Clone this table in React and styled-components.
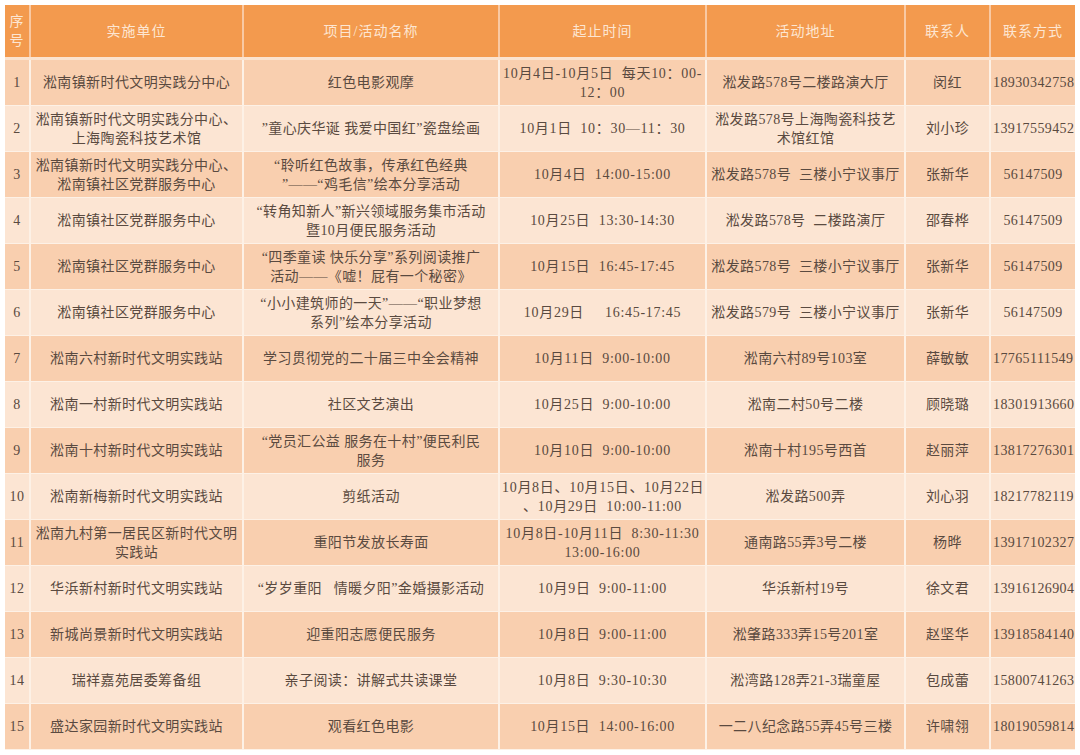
import React from "react";
import styled, { createGlobalStyle } from "styled-components";

const GlobalStyle = createGlobalStyle`
  html, body {
    margin: 0;
    padding: 0;
    background: #ffffff;
  }
`;

const Page = styled.div`
  padding: 5px;
  width: 1080px;
  box-sizing: border-box;
`;

const Table = styled.table`
  width: 1070px;
  table-layout: fixed;
  border-collapse: collapse;
  font-family: "Liberation Serif", "Noto Sans CJK SC", serif;
  font-size: 14px;
  line-height: 19px;
  color: #5a4a40;
`;

const HeadCell = styled.th`
  height: 52px;
  padding: 0;
  background: #f39a4e;
  color: #fde6d2;
  font-weight: normal;
  letter-spacing: 1px;
  text-align: center;
  vertical-align: middle;
  border-left: 2px solid #f9c9a3;
  border-bottom: 3px solid #fbe3cf;
  &:first-child {
    border-left: none;
  }
`;

const Row = styled.tr`
  background: ${(p) => (p.$odd ? "#f9cfaf" : "#fce5d3")};
`;

const Cell = styled.td`
  height: 45px;
  padding: 0 2px;
  text-align: center;
  vertical-align: middle;
  letter-spacing: ${(p) => (p.$wide ? "0.7px" : "0.4px")};
  border-left: 2px solid #fdf1e6;
  border-bottom: 1px solid #fdf1e6;
  white-space: nowrap;
  &:first-child {
    border-left: none;
    padding: 0;
  }
`;

const widths = [25, 213, 256, 207, 199, 85, 85];

const headers = [
  <>序<br />号</>,
  "实施单位",
  "项目/活动名称",
  "起止时间",
  "活动地址",
  "联系人",
  "联系方式",
];

const rows = [
  ["淞南镇新时代文明实践分中心", "红色电影观摩", "10月4日-10月5日  每天10：00-\n12：00", "淞发路578号二楼路演大厅", "闵红", "18930342758"],
  ["淞南镇新时代文明实践分中心、\n上海陶瓷科技艺术馆", "”童心庆华诞 我爱中国红”瓷盘绘画", "10月1日  10：30—11：30", "淞发路578号上海陶瓷科技艺\n术馆红馆", "刘小珍", "13917559452"],
  ["淞南镇新时代文明实践分中心、\n淞南镇社区党群服务中心", "“聆听红色故事，传承红色经典\n”——“鸡毛信”绘本分享活动", "10月4日  14:00-15:00", "淞发路578号  三楼小宁议事厅", "张新华", "56147509"],
  ["淞南镇社区党群服务中心", "“转角知新人”新兴领域服务集市活动\n暨10月便民服务活动", "10月25日  13:30-14:30", "淞发路578号  二楼路演厅", "邵春桦", "56147509"],
  ["淞南镇社区党群服务中心", "“四季童读 快乐分享”系列阅读推广\n活动——《嘘！屁有一个秘密》", "10月15日  16:45-17:45", "淞发路578号  三楼小宁议事厅", "张新华", "56147509"],
  ["淞南镇社区党群服务中心", "“小小建筑师的一天”——“职业梦想\n系列”绘本分享活动", "10月29日     16:45-17:45", "淞发路579号  三楼小宁议事厅", "张新华", "56147509"],
  ["淞南六村新时代文明实践站", "学习贯彻党的二十届三中全会精神", "10月11日  9:00-10:00", "淞南六村89号103室", "薛敏敏", "17765111549"],
  ["淞南一村新时代文明实践站", "社区文艺演出", "10月25日  9:00-10:00", "淞南二村50号二楼", "顾晓璐", "18301913660"],
  ["淞南十村新时代文明实践站", "“党员汇公益 服务在十村”便民利民\n服务", "10月10日  9:00-10:00", "淞南十村195号西首", "赵丽萍", "13817276301"],
  ["淞南新梅新时代文明实践站", "剪纸活动", "10月8日、10月15日、10月22日\n、10月29日  10:00-11:00", "淞发路500弄", "刘心羽", "18217782119"],
  ["淞南九村第一居民区新时代文明\n实践站", "重阳节发放长寿面", "10月8日-10月11日  8:30-11:30\n13:00-16:00", "通南路55弄3号二楼", "杨晔", "13917102327"],
  ["华浜新村新时代文明实践站", "“岁岁重阳   情暖夕阳”金婚摄影活动", "10月9日  9:00-11:00", "华浜新村19号", "徐文君", "13916126904"],
  ["新城尚景新时代文明实践站", "迎重阳志愿便民服务", "10月8日  9:00-11:00", "淞肇路333弄15号201室", "赵坚华", "13918584140"],
  ["瑞祥嘉苑居委筹备组", "亲子阅读：讲解式共读课堂", "10月8日  9:30-10:30", "淞湾路128弄21-3瑞童屋", "包成蕾", "15800741263"],
  ["盛达家园新时代文明实践站", "观看红色电影", "10月15日  14:00-16:00", "一二八纪念路55弄45号三楼", "许啸翎", "18019059814"],
];

const Lines = ({ text }) =>
  text.split("\n").map((line, i) => (
    <React.Fragment key={i}>
      {i > 0 && <br />}
      {line.replace(/ {2,}/g, (m) => "\u00a0".repeat(m.length))}
    </React.Fragment>
  ));

export default function App() {
  return (
    <>
      <GlobalStyle />
      <Page>
        <Table>
          <colgroup>
            {widths.map((w, i) => (
              <col key={i} style={{ width: w }} />
            ))}
          </colgroup>
          <thead>
            <tr>
              {headers.map((h, i) => (
                <HeadCell key={i}>{h}</HeadCell>
              ))}
            </tr>
          </thead>
          <tbody>
            {rows.map((r, i) => (
              <Row key={i} $odd={i % 2 === 0}>
                <Cell>{i + 1}</Cell>
                {r.map((c, j) => (
                  <Cell key={j} $wide={j === 2}>
                    <Lines text={c} />
                  </Cell>
                ))}
              </Row>
            ))}
          </tbody>
        </Table>
      </Page>
    </>
  );
}
